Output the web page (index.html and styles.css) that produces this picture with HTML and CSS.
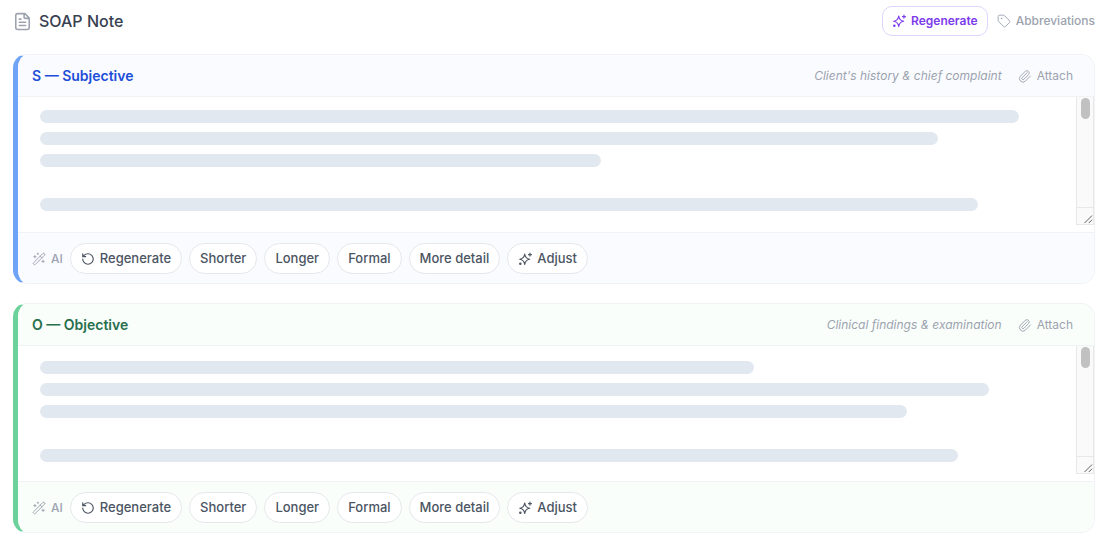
FILE: index.html
```html
<!DOCTYPE html>
<html lang="en">
<head>
<meta charset="utf-8">
<meta name="viewport" content="width=device-width, initial-scale=1">
<title>SOAP Note</title>
<link rel="stylesheet" href="styles.css">
</head>
<body>
<svg class="sprite" aria-hidden="true">
  <symbol id="file" viewBox="0 0 24 24"><path d="M14 2v4.500a1.500 1.500 0 0 0 1.500 1.500H20M15 2H6a2.500 2.500 0 0 0-2.500 2.500v15A2.500 2.500 0 0 0 6 22h12a2.500 2.500 0 0 0 2.500-2.500V7.500zM8 9h2M8 13h8M8 17h8"/></symbol>
  <symbol id="sparkles" viewBox="0 0 24 24"><path d="M11.500 3.500c.7 5.600 3 8 8.500 9-5.500 1-7.800 3.400-8.500 9-.7-5.600-3-8-8.500-9 5.500-1 7.800-3.400 8.500-9zM20.500 2v5M18 4.500h5"/><circle cx="4" cy="20" r="1.200"/></symbol>
  <symbol id="tag" viewBox="0 0 24 24"><path d="M12.600 2.600A2 2 0 0 0 11.200 2H4a2 2 0 0 0-2 2v7.200a2 2 0 0 0 .6 1.400l8.700 8.700a2.400 2.400 0 0 0 3.400 0l6.600-6.600a2.400 2.400 0 0 0 0-3.400z"/><circle cx="7.500" cy="7.500" r=".6"/></symbol>
  <symbol id="clip" viewBox="0 0 24 24"><path d="m15.500 6.500-8.400 8.600a2 2 0 0 0 2.800 2.800l8.400-8.600a4 4 0 0 0-5.600-5.600L4.300 12.200a6 6 0 0 0 8.500 8.500l8.500-8.600"/></symbol>
  <symbol id="wand" viewBox="0 0 24 24"><path d="m21.600 3.600-1.200-1.200a1.200 1.200 0 0 0-1.800 0L2.400 18.600a1.200 1.200 0 0 0 0 1.800l1.200 1.200a1.200 1.200 0 0 0 1.800 0L21.600 5.400a1.200 1.200 0 0 0 0-1.800zM14 7l3 3M5 6v4M3 8h4M19 14v4M17 16h4M10 2v2M9 3h2"/></symbol>
  <symbol id="undo" viewBox="0 0 24 24"><path d="M3 12a9 9 0 1 0 9-9 9.800 9.800 0 0 0-6.700 2.700L3 8M3 3v5h5"/></symbol>
</svg>

<main class="page">
  <header class="topbar">
    <h1 class="title"><svg class="icon icon-large"><use href="#file"/></svg>SOAP Note</h1>
    <div class="top-actions">
      <button class="button-outline" type="button"><svg class="icon"><use href="#sparkles"/></svg>Regenerate</button>
      <button class="button-plain" type="button"><svg class="icon icon-thin"><use href="#tag"/></svg>Abbreviations</button>
    </div>
  </header>

  <section class="card card-blue">
    <header class="card-head">
      <h2 class="card-title">S — Subjective</h2>
      <span class="hint">Client's history &amp; chief complaint</span>
      <button class="button-plain" type="button"><svg class="icon icon-thin"><use href="#clip"/></svg>Attach</button>
    </header>
    <div class="card-body">
      <div class="lines">
        <span class="line w96"></span>
        <span class="line w88"></span>
        <span class="line w55"></span>
        <span class="line line-paragraph w92"></span>
      </div>
      <div class="scrollbar"><span class="thumb"></span><svg class="grip" viewBox="0 0 17 17"><path d="M8 16 16 8M12.500 16l3.500-3.500"/></svg></div>
    </div>
    <footer class="card-foot">
      <span class="ai"><svg class="icon icon-thin"><use href="#wand"/></svg>AI</span>
      <button class="pill" type="button"><svg class="icon"><use href="#undo"/></svg>Regenerate</button>
      <button class="pill" type="button">Shorter</button>
      <button class="pill" type="button">Longer</button>
      <button class="pill" type="button">Formal</button>
      <button class="pill" type="button">More detail</button>
      <button class="pill" type="button"><svg class="icon"><use href="#sparkles"/></svg>Adjust</button>
    </footer>
  </section>

  <section class="card card-green">
    <header class="card-head">
      <h2 class="card-title">O — Objective</h2>
      <span class="hint">Clinical findings &amp; examination</span>
      <button class="button-plain" type="button"><svg class="icon icon-thin"><use href="#clip"/></svg>Attach</button>
    </header>
    <div class="card-body">
      <div class="lines">
        <span class="line w70"></span>
        <span class="line w93"></span>
        <span class="line w85"></span>
        <span class="line line-paragraph w90"></span>
      </div>
      <div class="scrollbar"><span class="thumb"></span><svg class="grip" viewBox="0 0 17 17"><path d="M8 16 16 8M12.500 16l3.500-3.500"/></svg></div>
    </div>
    <footer class="card-foot">
      <span class="ai"><svg class="icon icon-thin"><use href="#wand"/></svg>AI</span>
      <button class="pill" type="button"><svg class="icon"><use href="#undo"/></svg>Regenerate</button>
      <button class="pill" type="button">Shorter</button>
      <button class="pill" type="button">Longer</button>
      <button class="pill" type="button">Formal</button>
      <button class="pill" type="button">More detail</button>
      <button class="pill" type="button"><svg class="icon"><use href="#sparkles"/></svg>Adjust</button>
    </footer>
  </section>
</main>
</body>
</html>
```

FILE: styles.css
```css
* { box-sizing: border-box; }

body {
  margin: 0;
  background: #fff;
  color: #4b5563;
  font: 12px/16px Inter, sans-serif;
}

button {
  margin: 0;
  padding: 0;
  border: 0;
  background: none;
  color: inherit;
  font: inherit;
  white-space: nowrap;
  cursor: pointer;
}

.sprite { display: none; }

.icon {
  width: 14px;
  height: 14px;
  flex: none;
  fill: none;
  stroke: currentColor;
  stroke-width: 2;
  stroke-linecap: round;
  stroke-linejoin: round;
}

.icon-thin { stroke-width: 1.6; }

.page {
  display: flex;
  flex-direction: column;
  padding: 6px 5px 3px 13px;
}

.topbar {
  display: flex;
  align-items: center;
  justify-content: space-between;
  margin-bottom: 18px;
}

.title {
  display: flex;
  align-items: center;
  gap: 7px;
  margin: 0;
  color: #374151;
  font-size: 16px;
  line-height: 24px;
  font-weight: 500;
}

.icon-large {
  width: 19px;
  height: 19px;
  color: #9ca3af;
}

.top-actions {
  display: flex;
  align-items: center;
  gap: 9px;
}

.button-outline,
.button-plain,
.pill,
.ai {
  display: flex;
  align-items: center;
  gap: 5px;
}

.button-outline {
  padding: 6px 9px;
  border: 1px solid #ddd6fe;
  border-radius: 10px;
  color: #7c3aed;
  font-weight: 600;
}

.button-plain { color: #9ca3af; }
.top-actions .button-plain { font-weight: 500; }

.card {
  border: 1px solid #f0f2f5;
  border-left: 5px solid var(--accent);
  border-radius: 14px;
  overflow: hidden;
}

.card + .card { margin-top: 19px; }

.card-blue {
  --accent: #6fa3f8;
  --tint: #fafbff;
  --heading: #1d4ed8;
  --body-top: 13px;
  --body-bottom: 14px;
}

.card-green {
  --accent: #6bd29c;
  --tint: #f9fefb;
  --heading: #286f4c;
  --body-top: 15px;
  --body-bottom: 12px;
}

.card-head {
  display: flex;
  align-items: center;
  padding: 10px 21px 10px 14px;
  border-bottom: 1px solid #f0f2f5;
  background: var(--tint);
}

.card-title {
  flex: 1;
  margin: 0;
  color: var(--heading);
  font-size: 14px;
  line-height: 21px;
  font-weight: 600;
}

.hint {
  margin-right: 16px;
  color: #9ca3af;
  font-style: italic;
}

.card-body {
  display: flex;
  padding-bottom: 7px;
}

.lines {
  display: flex;
  flex: 1;
  flex-direction: column;
  gap: 9px;
  padding: var(--body-top) 16px var(--body-bottom) 22px;
}

.line {
  height: 13px;
  border-radius: 7px;
  background: #e2e8f0;
}

.line-paragraph { margin-top: 22px; }

.w55 { width: 55%; }
.w70 { width: 70%; }
.w85 { width: 85%; }
.w88 { width: 88%; }
.w90 { width: 90%; }
.w92 { width: 92%; }
.w93 { width: 93%; }
.w96 { width: 96%; }

.scrollbar {
  display: flex;
  flex-direction: column;
  align-items: center;
  justify-content: space-between;
  width: 18px;
  padding-top: 1px;
  border: solid #e8e8e8;
  border-width: 0 1px 1px;
  background: #fafafa;
}

.thumb {
  width: 9px;
  height: 21px;
  border-radius: 5px;
  background: #c1c1c1;
}

.grip {
  width: 100%;
  height: 17px;
  border-top: 1px solid #e8e8e8;
  fill: none;
  stroke: #555;
}

.card-foot {
  display: flex;
  align-items: center;
  gap: 7px;
  padding: 10px 14px 9px;
  border-top: 1px solid #f0f2f5;
  background: var(--tint);
}

.ai {
  color: #9ca3af;
  font-weight: 500;
}

.pill {
  padding: 6px 10px;
  border: 1px solid #e5e7eb;
  border-radius: 16px;
  background: #fff;
  font-size: 13px;
  line-height: 17px;
  font-weight: 500;
}
```
